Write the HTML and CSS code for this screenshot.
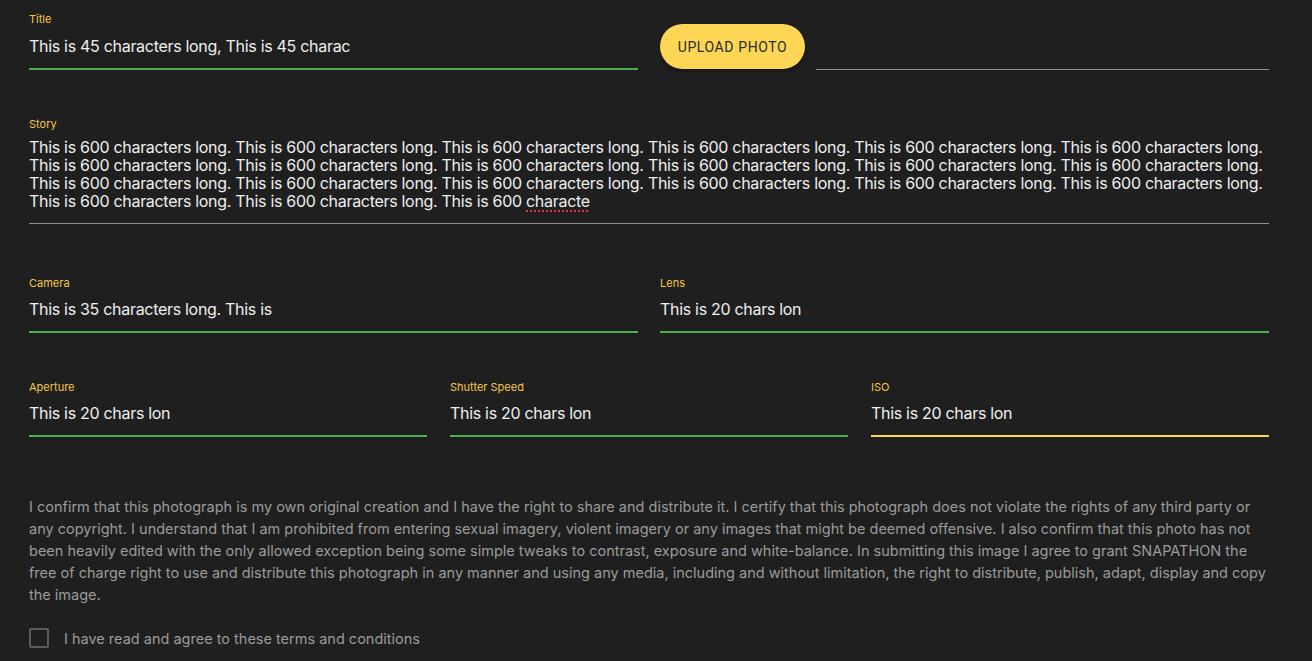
FILE: index.html
```html
<!DOCTYPE html>
<html>
<head>
<meta charset="utf-8">
<link rel="stylesheet" href="styles.css">
</head>
<body>
<div class="page">
  <div class="title-row">
    <div class="field field-title">
      <div class="label">Title</div>
      <div class="value">This is 45 characters long, This is 45 charac</div>
    </div>
    <button class="upload">UPLOAD PHOTO</button>
    <div class="file-line"></div>
  </div>

  <div class="field story">
    <div class="label">Story</div>
    <div class="value multi">This is 600 characters long. This is 600 characters long. This is 600 characters long. This is 600 characters long. This is 600 characters long. This is 600 characters long. This is 600 characters long. This is 600 characters long. This is 600 characters long. This is 600 characters long. This is 600 characters long. This is 600 characters long. This is 600 characters long. This is 600 characters long. This is 600 characters long. This is 600 characters long. This is 600 characters long. This is 600 characters long. This is 600 characters long. This is 600 characters long. This is 600 <span class="spell">characte</span></div>
  </div>

  <div class="row two">
    <div class="field">
      <div class="label">Camera</div>
      <div class="value">This is 35 characters long. This is</div>
    </div>
    <div class="field">
      <div class="label">Lens</div>
      <div class="value">This is 20 chars lon</div>
    </div>
  </div>

  <div class="row three">
    <div class="field">
      <div class="label">Aperture</div>
      <div class="value">This is 20 chars lon</div>
    </div>
    <div class="field">
      <div class="label">Shutter Speed</div>
      <div class="value">This is 20 chars lon</div>
    </div>
    <div class="field focused">
      <div class="label">ISO</div>
      <div class="value">This is 20 chars lon</div>
    </div>
  </div>

  <p class="terms">I confirm that this photograph is my own original creation and I have the right to share and distribute it. I certify that this photograph does not violate the rights of any third party or any copyright. I understand that I am prohibited from entering sexual imagery, violent imagery or any images that might be deemed offensive. I also confirm that this photo has not been heavily edited with the only allowed exception being some simple tweaks to contrast, exposure and white-balance. In submitting this image I agree to grant SNAPATHON the free of charge right to use and distribute this photograph in any manner and using any media, including and without limitation, the right to distribute, publish, adapt, display and copy the image.</p>

  <label class="agree">
    <span class="box"></span>
    <span class="agree-text">I have read and agree to these terms and conditions</span>
  </label>
</div>
</body>
</html>
```
FILE: styles.css
```css
html, body {
  margin: 0;
  padding: 0;
  background: #1f1f1f;
}
body {
  font-family: Inter, "Noto Sans", "Liberation Sans", sans-serif;
  color: #ececec;
}
.page {
  width: 1240px;
  padding: 13px 0 0 29px;
}
.title-row {
  display: flex;
  align-items: flex-start;
}
.field {
  border-bottom: 2px solid #4caf50;
  padding-bottom: 12px;
}
.field-title {
  width: 609px;
  flex: none;
}
.label {
  font-size: 11px;
  line-height: 12px;
  color: #f5c842;
  font-weight: 400;
}
.value {
  margin-top: 11px;
  font-size: 16px;
  letter-spacing: -0.3px;
  line-height: 20px;
  color: #efefef;
  white-space: nowrap;
}
.upload {
  flex: none;
  margin: 11px 0 0 22px;
  width: 145px;
  height: 45px;
  border: none;
  border-radius: 23px;
  background: #fdd655;
  color: #2b2b2b;
  font-family: Roboto, "Liberation Sans", sans-serif;
  font-size: 14px;
  font-weight: 400;
  letter-spacing: 0.6px;
  box-shadow: 0 2px 3px rgba(0,0,0,0.35);
  padding: 0;
}
.file-line {
  flex: 1;
  margin: 56px 0 0 11px;
  border-bottom: 1px solid #8c8c8c;
}
.story {
  margin-top: 48px;
  border-bottom: 1px solid #8c8c8c;
  padding-bottom: 13px;
}
.value.multi {
  margin-top: 8px;
  line-height: 18px;
  white-space: normal;
}
.spell {
  text-decoration: underline dotted #e0393e;
  text-decoration-thickness: 2px;
  text-underline-offset: 3px;
}
.row {
  display: grid;
  margin-top: 53px;
}
.row.two {
  grid-template-columns: 609px 609px;
  column-gap: 22px;
}
.row.three {
  margin-top: 48px;
  grid-template-columns: 398px 398px 398px;
  column-gap: 23px;
}
.row .value {
  margin-top: 10px;
}
.field.focused {
  border-bottom-color: #fdd655;
}
.terms {
  margin: 59px 0 0;
  font-size: 14.5px;
  line-height: 22px;
  color: #9b9b9b;
}
.agree {
  display: flex;
  align-items: center;
  margin-top: 22px;
}
.box {
  width: 16px;
  height: 16px;
  border: 2px solid #5c5c5c;
  border-radius: 2px;
  flex: none;
}
.agree-text {
  margin-left: 15px;
  font-size: 14.5px;
  color: #9b9b9b;
}
```
